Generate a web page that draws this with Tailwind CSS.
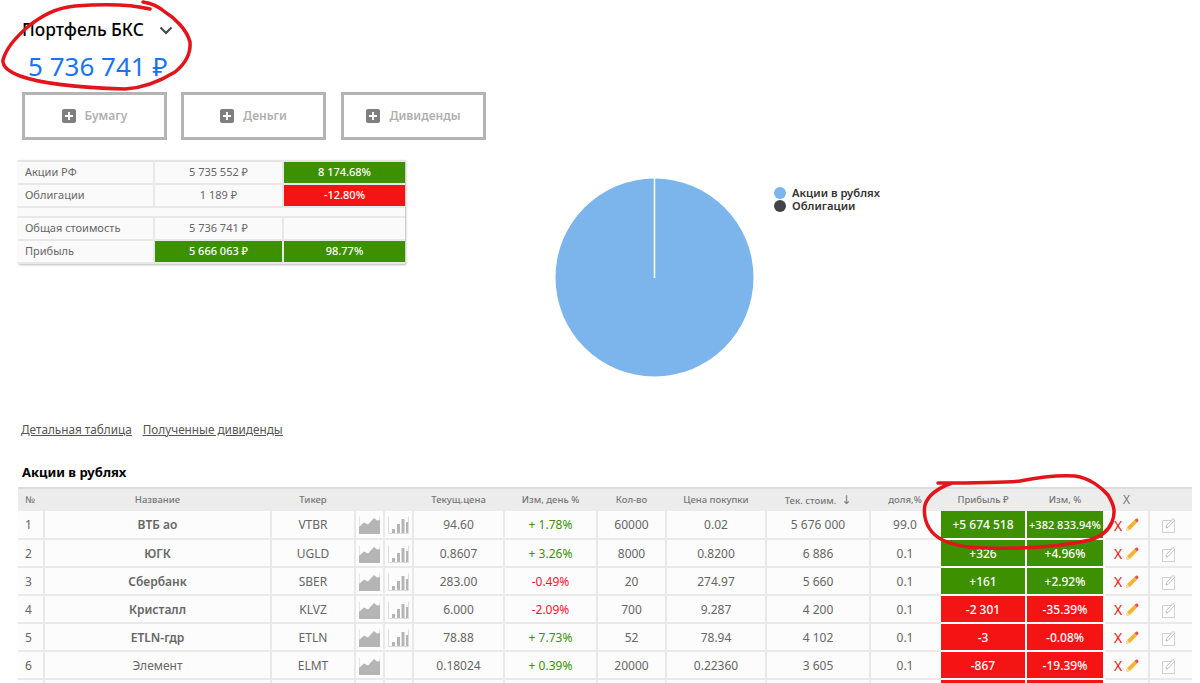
<!DOCTYPE html>
<html lang="ru">
<head>
    <meta charset="UTF-8">
    <meta name="viewport" content="width=device-width, initial-scale=1.0">
    <script src="https://cdn.jsdelivr.net/npm/@tailwindcss/browser@4"></script>
    <title>Портфель БКС</title>
</head>
<body class="relative h-[683px] overflow-hidden bg-white font-['Noto_Sans','DejaVu_Sans',sans-serif] text-[#666]">
    <svg width="0" height="0" class="absolute">
        <symbol id="area" viewBox="0 0 21 18">
            <path d="M0.5 0.5V17.5H20.5V0.5" fill="none" stroke="#e6e6e6"/>
            <path d="M0 18V11L5 6.5L9 8.5L15 2L18 4.5L21 4V18Z" fill="#b5b5b5"/>
        </symbol>
        <symbol id="bars" viewBox="0 0 21 18">
            <path d="M0.5 0.5V17.5H20.5V0.5" fill="none" stroke="#dcdcdc"/>
            <path d="M4 13H7V17H4ZM9 8H12V17H9ZM13.500 3H16.500V17H13.500ZM18 6H20V17H18Z" fill="#b5b5b5"/>
        </symbol>
        <symbol id="pencil" viewBox="0 0 14 14">
            <path d="M1 13L2 9L9.500 2L12 4.500L5 12Z" fill="#f2b431"/>
            <path d="M1 13L2 9L5 12Z" fill="#f6dfb0"/>
            <path d="M9.500 2L11 0.800C11.600 0.400 12.300 0.500 12.800 1L13.200 1.500C13.600 2 13.600 2.700 13.200 3.200L12 4.500Z" fill="#e2574c"/>
        </symbol>
        <symbol id="note" viewBox="0 0 13 16">
            <path d="M0.500 3.500H12.500V15.500H0.500Z" fill="#fff" stroke="#cfcfcf"/>
            <path d="M4 11L4.500 8.500L11 1.500L12.800 3.200L6 10.500Z" fill="#fff" stroke="#bdbdbd"/>
        </symbol>
    </svg>

    <div class="flex h-[420px] pl-[18px]">
        <div class="w-[537px] shrink-0">
            <div class="flex items-center pl-1 pt-[18px] text-[17.300px] font-medium leading-6 text-black">
                Портфель БКС
                <svg class="ml-[15px]" width="14" height="9" viewBox="0 0 14 9"><path d="M1.500 1.500L7 7L12.500 1.500" fill="none" stroke="#444" stroke-width="2"/></svg>
            </div>
            <div class="mt-[4px] pl-[10px] text-[26px] leading-[40px] text-[#1a73f5]">5 736 741 ₽</div>
            <div class="ml-1 mt-[6px] flex gap-[14px]">
                <div class="flex h-12 w-[145px] items-center justify-center gap-[9px] border-[3px] border-[#b4b4b4] text-[12px] font-semibold text-[#b0b0b0]">
                    <svg width="14" height="14" viewBox="0 0 14 14"><rect width="14" height="14" rx="2" fill="#7f7f7f"/><path d="M7 3V11M3 7H11" stroke="#fff" stroke-width="2"/></svg>Бумагу
                </div>
                <div class="flex h-12 w-[145px] items-center justify-center gap-[9px] border-[3px] border-[#b4b4b4] text-[12px] font-semibold text-[#b0b0b0]">
                    <svg width="14" height="14" viewBox="0 0 14 14"><rect width="14" height="14" rx="2" fill="#7f7f7f"/><path d="M7 3V11M3 7H11" stroke="#fff" stroke-width="2"/></svg>Деньги
                </div>
                <div class="ml-px flex h-12 w-[145px] items-center justify-center gap-[9px] border-[3px] border-[#b4b4b4] text-[12px] font-semibold text-[#b0b0b0]">
                    <svg width="14" height="14" viewBox="0 0 14 14"><rect width="14" height="14" rx="2" fill="#7f7f7f"/><path d="M7 3V11M3 7H11" stroke="#fff" stroke-width="2"/></svg>Дивиденды
                </div>
            </div>
            <table class="mt-[20px] w-[387px] table-fixed border-t-2 border-[#e4e4e4] bg-[#fafafa] text-[11px] shadow-[1px_1px_2px_#bbb] [&_td]:h-[23px] [&_td]:border-b-2 [&_td]:border-[#e8e8e8]">
                <colgroup><col class="w-[136px]"><col class="w-[129px]"><col class="w-[122px]"></colgroup>
                <tr><td class="pl-[7px]">Акции РФ</td><td class="border-l-2 border-l-[#eee] text-center">5 735 552 ₽</td><td class="border-l-2 border-l-white bg-[#3d9000] text-center font-medium text-white">8 174.68%</td></tr>
                <tr><td class="pl-[7px]">Облигации</td><td class="border-l-2 border-l-[#eee] text-center">1 189 ₽</td><td class="border-l-2 border-l-white bg-[#f51414] text-center font-medium text-white">-12.80%</td></tr>
                <tr><td colspan="3" class="!h-[10px]"></td></tr>
                <tr><td class="pl-[7px]">Общая стоимость</td><td class="border-l-2 border-l-[#eee] text-center">5 736 741 ₽</td><td class="border-l-2 border-l-[#eee]"></td></tr>
                <tr><td class="pl-[7px]">Прибыль</td><td class="border-l-2 border-l-white bg-[#3d9000] text-center font-medium text-white">5 666 063 ₽</td><td class="border-l-2 border-l-white bg-[#3d9000] text-center font-medium text-white">98.77%</td></tr>
            </table>
        </div>
        <div class="flex pt-[178px]">
            <svg width="199" height="199" viewBox="0 0 199 199" class="shrink-0">
                <circle cx="99.500" cy="99.500" r="99" fill="#7cb5ec"/>
                <path d="M99.500 0V100" stroke="#fff" stroke-width="1.500"/>
            </svg>
            <div class="ml-5 pt-[8px] text-[11.250px] font-semibold leading-[13px] text-[#333]">
                <div class="flex items-center gap-[6px]"><span class="size-3 rounded-full bg-[#7cb5ec]"></span>Акции в рублях</div>
                <div class="flex items-center gap-[6px]"><span class="size-3 rounded-full bg-[#434348]"></span>Облигации</div>
            </div>
        </div>
    </div>

    <div class="flex gap-[11px] pl-[21px] text-[11.750px] leading-[18px] text-[#555] underline">
        <a href="#">Детальная таблица</a>
        <a href="#">Полученные дивиденды</a>
    </div>
    <h2 class="mt-[25px] pl-[22px] text-[13px] font-bold leading-[18px] text-black">Акции в рублях</h2>

    <div class="ml-[18px] mt-[6px]">
        <table class="w-[1174px] table-fixed border-t-2 border-[#ddd] bg-[#fcfcfc] text-center text-[12px] [&_td]:h-7 [&_td]:border-b-2 [&_td]:border-l-2 [&_td]:border-[#e9e9e9] [&_td]:pt-px [&_svg]:mx-auto">
            <colgroup>
                <col class="w-[26px]"><col class="w-[227px]"><col class="w-[84px]"><col class="w-[29px]"><col class="w-[29px]"><col class="w-[91px]"><col class="w-[93px]"><col class="w-[69px]"><col class="w-[100px]"><col class="w-[104px]"><col class="w-[70px]"><col class="w-[86px]"><col class="w-[78px]"><col class="w-[45px]"><col class="w-[43px]">
            </colgroup>
            <tr class="h-[23px] bg-[#ececec] text-[9.500px] font-medium text-[#777]">
                <th class="pl-[7px] text-left font-medium">№</th><th class="font-medium">Название</th><th class="font-medium">Тикер</th><th></th><th></th><th class="font-medium">Текущ.цена</th><th class="font-medium">Изм, день %</th><th class="font-medium">Кол-во</th><th class="font-medium">Цена покупки</th><th class="font-medium">Тек. стоим. &nbsp;<span class="text-[12px]">↓</span></th><th class="font-medium">доля,%</th><th class="font-medium">Прибыль ₽</th><th class="font-medium">Изм, %</th><th class="text-[12px] font-normal">X</th><th></th>
            </tr>
            <tr>
                <td class="!border-l-0 pl-[7px] text-left">1</td><td class="font-semibold">ВТБ ао</td><td>VTBR</td><td><svg width="21" height="18"><use href="#area"/></svg></td><td><svg width="21" height="18"><use href="#bars"/></svg></td><td>94.60</td><td class="text-[#3d9000]">+ 1.78%</td><td>60000</td><td>0.02</td><td>5 676 000</td><td>99.0</td><td class="!border-white bg-[#3d9000] font-medium text-white">+5 674 518</td><td class="!border-white bg-[#3d9000] font-medium whitespace-nowrap text-[11px] text-white">+382 833.94%</td>
                <td class="!border-l-white"><div class="flex items-center justify-center gap-[3px] text-[14px] text-[#f51414]">X<svg class="!mx-0" width="14" height="14"><use href="#pencil"/></svg></div></td><td class="pr-[6px]"><svg width="13" height="16"><use href="#note"/></svg></td>
            </tr>
            <tr>
                <td class="!border-l-0 pl-[7px] text-left">2</td><td class="font-semibold">ЮГК</td><td>UGLD</td><td><svg width="21" height="18"><use href="#area"/></svg></td><td><svg width="21" height="18"><use href="#bars"/></svg></td><td>0.8607</td><td class="text-[#3d9000]">+ 3.26%</td><td>8000</td><td>0.8200</td><td>6 886</td><td>0.1</td><td class="!border-white bg-[#3d9000] font-medium text-white">+326</td><td class="!border-white bg-[#3d9000] font-medium text-white">+4.96%</td>
                <td class="!border-l-white"><div class="flex items-center justify-center gap-[3px] text-[14px] text-[#f51414]">X<svg class="!mx-0" width="14" height="14"><use href="#pencil"/></svg></div></td><td class="pr-[6px]"><svg width="13" height="16"><use href="#note"/></svg></td>
            </tr>
            <tr>
                <td class="!border-l-0 pl-[7px] text-left">3</td><td class="font-semibold">Сбербанк</td><td>SBER</td><td><svg width="21" height="18"><use href="#area"/></svg></td><td><svg width="21" height="18"><use href="#bars"/></svg></td><td>283.00</td><td class="text-[#f51433]">-0.49%</td><td>20</td><td>274.97</td><td>5 660</td><td>0.1</td><td class="!border-white bg-[#3d9000] font-medium text-white">+161</td><td class="!border-white bg-[#3d9000] font-medium text-white">+2.92%</td>
                <td class="!border-l-white"><div class="flex items-center justify-center gap-[3px] text-[14px] text-[#f51414]">X<svg class="!mx-0" width="14" height="14"><use href="#pencil"/></svg></div></td><td class="pr-[6px]"><svg width="13" height="16"><use href="#note"/></svg></td>
            </tr>
            <tr>
                <td class="!border-l-0 pl-[7px] text-left">4</td><td class="font-semibold">Кристалл</td><td>KLVZ</td><td><svg width="21" height="18"><use href="#area"/></svg></td><td><svg width="21" height="18"><use href="#bars"/></svg></td><td>6.000</td><td class="text-[#f51433]">-2.09%</td><td>700</td><td>9.287</td><td>4 200</td><td>0.1</td><td class="!border-white bg-[#f51414] font-medium text-white">-2 301</td><td class="!border-white bg-[#f51414] font-medium text-white">-35.39%</td>
                <td class="!border-l-white"><div class="flex items-center justify-center gap-[3px] text-[14px] text-[#f51414]">X<svg class="!mx-0" width="14" height="14"><use href="#pencil"/></svg></div></td><td class="pr-[6px]"><svg width="13" height="16"><use href="#note"/></svg></td>
            </tr>
            <tr>
                <td class="!border-l-0 pl-[7px] text-left">5</td><td class="font-semibold">ETLN-гдр</td><td>ETLN</td><td><svg width="21" height="18"><use href="#area"/></svg></td><td><svg width="21" height="18"><use href="#bars"/></svg></td><td>78.88</td><td class="text-[#3d9000]">+ 7.73%</td><td>52</td><td>78.94</td><td>4 102</td><td>0.1</td><td class="!border-white bg-[#f51414] font-medium text-white">-3</td><td class="!border-white bg-[#f51414] font-medium text-white">-0.08%</td>
                <td class="!border-l-white"><div class="flex items-center justify-center gap-[3px] text-[14px] text-[#f51414]">X<svg class="!mx-0" width="14" height="14"><use href="#pencil"/></svg></div></td><td class="pr-[6px]"><svg width="13" height="16"><use href="#note"/></svg></td>
            </tr>
            <tr>
                <td class="!border-l-0 pl-[7px] text-left">6</td><td>Элемент</td><td>ELMT</td><td><svg width="21" height="18"><use href="#area"/></svg></td><td></td><td>0.18024</td><td class="text-[#3d9000]">+ 0.39%</td><td>20000</td><td>0.22360</td><td>3 605</td><td>0.1</td><td class="!border-white bg-[#f51414] font-medium text-white">-867</td><td class="!border-white bg-[#f51414] font-medium text-white">-19.39%</td>
                <td class="!border-l-white"><div class="flex items-center justify-center gap-[3px] text-[14px] text-[#f51414]">X<svg class="!mx-0" width="14" height="14"><use href="#pencil"/></svg></div></td><td class="pr-[6px]"><svg width="13" height="16"><use href="#note"/></svg></td>
            </tr>
            <tr>
                <td class="!border-l-0"></td><td></td><td></td><td></td><td></td><td></td><td></td><td></td><td></td><td></td><td></td><td class="!border-white bg-[#f51414]"></td><td class="!border-white bg-[#f51414]"></td><td class="!border-l-white"></td><td></td>
            </tr>
        </table>
    </div>

    <!-- red marker circles drawn over the page -->
    <svg class="pointer-events-none absolute left-0 top-0" width="1200" height="683" viewBox="0 0 1200 683" fill="none" stroke="#e3141a" stroke-width="3.500" stroke-linecap="round">
        <path d="M150 9C130 4 100 4 75 6C55 8 42 16 30 25C18 35 6 48 3 60C2 68 12 73 20 76C45 85 90 88 125 89C145 88 162 80 175 72C185 64 191 55 190 42C187 30 175 18 165 12C158 6 150 3 143 2"/>
        <path d="M938 483C960 483 1000 483 1020 481C1040 477 1060 475 1075 476C1090 478 1102 488 1108 495C1114 505 1116 512 1112 522C1108 532 1100 537 1090 540C1060 547 1020 549 985 548C960 548 943 542 935 535C926 527 923 515 925 505C928 495 938 488 952 483"/>
    </svg>
</body>
</html>
